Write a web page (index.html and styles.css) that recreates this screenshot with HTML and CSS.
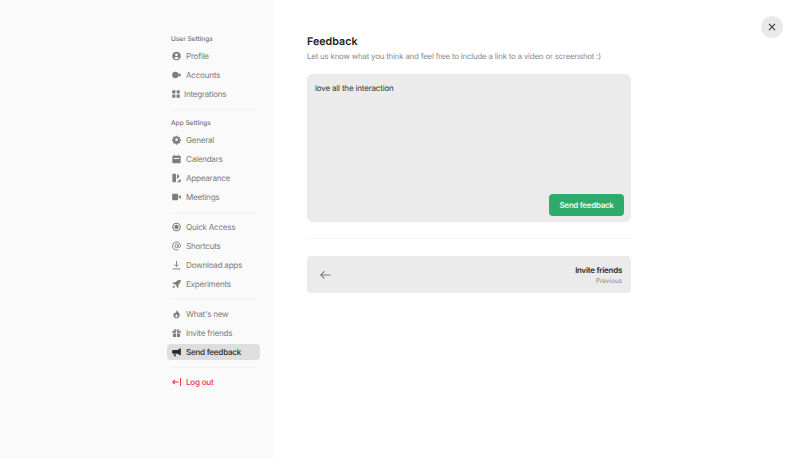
FILE: index.html
```html
<!DOCTYPE html>
<html lang="en">
<head>
<meta charset="utf-8">
<title>Feedback</title>
<link rel="stylesheet" href="styles.css">
</head>
<body>
<div class="app">
  <nav class="sidebar">
    <div class="group-title">User Settings</div>
    <a class="item"><svg class="icon" viewBox="0 0 10 10"><path fill-rule="evenodd" d="M5 .2a4.800 4.800 0 1 0 0 9.600A4.800 4.800 0 0 0 5 .2zm0 1.900a1.600 1.600 0 1 1 0 3.200 1.600 1.600 0 0 1 0-3.200zM2.300 7.300C2.800 6.400 3.800 6 5 6s2.200.4 2.700 1.300A3.500 3.500 0 0 1 5 8.600a3.500 3.500 0 0 1-2.700-1.300z"/></svg>Profile</a>
    <a class="item"><svg class="icon" viewBox="0 0 10 10"><circle cx="3.700" cy="5" r="3.500"/><circle cx="8.300" cy="5" r="1.600"/></svg>Accounts</a>
    <a class="item tight"><svg class="icon small" viewBox="0 0 8 8"><rect x=".2" y=".2" width="3.200" height="3.200" rx=".5"/><rect x="4.600" y=".2" width="3.200" height="3.200" rx=".9"/><rect x=".2" y="4.600" width="3.200" height="3.200" rx=".5"/><rect x="4.600" y="4.600" width="3.200" height="3.200" rx=".5"/></svg>Integrations</a>
    <hr class="divider">
    <div class="group-title">App Settings</div>
    <a class="item"><svg class="icon" viewBox="0 0 10 10"><path fill-rule="evenodd" d="M4.100.2h1.800l.3 1.300.8.4 1.200-.7 1.300 1.300-.7 1.200.4.8 1.300.3v1.800l-1.300.3-.4.8.7 1.200-1.300 1.300-1.200-.7-.8.4-.3 1.300H4.100l-.3-1.300-.8-.4-1.200.7L.5 8.600l.7-1.200-.4-.8L-.5 6.300V4.500l1.300-.3.4-.8-.7-1.200 1.300-1.300 1.200.7.8-.4zM5 3.400a1.600 1.600 0 1 0 0 3.200 1.600 1.600 0 0 0 0-3.200z" transform="translate(.5 .1) scale(.9)"/></svg>General</a>
    <a class="item"><svg class="icon" viewBox="0 0 10 10"><path fill-rule="evenodd" d="M2.400.4h1v1h3.200v-1h1v1h1.200c.4 0 .8.4.8.8v6.600c0 .5-.4.8-.8.8H1.200a.8.8 0 0 1-.8-.8V2.200c0-.4.4-.8.8-.8h1.200zM2 4v1h6V4z"/></svg>Calendars</a>
    <a class="item"><svg class="icon" viewBox="0 0 10 10"><rect x=".4" y=".3" width="4" height="9.400" rx=".7"/><path d="M5.500 1.400l1.200-.6 1.600 2.400-2.800 3.200zM5.300 9.700l4.400-3.900v3.200c0 .4-.3.7-.7.7z"/></svg>Appearance</a>
    <a class="item"><svg class="icon" viewBox="0 0 10 10"><rect x=".2" y="1.400" width="6.600" height="7.200" rx=".9"/><path d="M7.600 4.200l2.200-1.400v4.400L7.600 5.800z"/></svg>Meetings</a>
    <hr class="divider">
    <a class="item"><svg class="icon" viewBox="0 0 10 10"><path fill-rule="evenodd" d="M5 .2a4.800 4.800 0 1 0 0 9.600A4.800 4.800 0 0 0 5 .2zm0 1.300a3.500 3.500 0 1 1 0 7 3.500 3.500 0 0 1 0-7z"/><circle cx="5" cy="5" r="2.400"/></svg>Quick Access</a>
    <a class="item"><svg class="icon outline" viewBox="0 0 10 10"><circle cx="5" cy="5" r="1.800"/><path d="M6.800 3.200V5.600c0 1.500 2.600 1.400 2.600-.6A4.400 4.400 0 1 0 7.200 8.800"/></svg>Shortcuts</a>
    <a class="item"><svg class="icon outline" viewBox="0 0 10 10"><path d="M5 .4v6.200M2.600 4.400L5 6.800l2.400-2.400M.8 9.400h8.400"/></svg>Download apps</a>
    <a class="item"><svg class="icon" viewBox="0 0 10 10"><path d="M9.800.2C7.600.2 5.600 1 4 3H1.600L.2 4.800h2.400l2.800 2.800v2.200l1.800-1.400V5.800C9 4.300 9.800 2.400 9.800.2z"/><path d="M1.800 6.400l1.800 1.800L.4 9.600z"/></svg>Experiments</a>
    <hr class="divider">
    <a class="item"><svg class="icon" viewBox="0 0 10 10"><path fill-rule="evenodd" d="M5.400.2c.3 1.500 1 2 1.700 2.900.7.9 1.400 1.900 1.400 3.200C8.500 8.400 6.900 9.800 5 9.800S1.500 8.400 1.500 6.300c0-1.200.5-2.200 1.200-3l.7 1.200C4.400 3.400 5.300 1.800 5.400.2zM5 5.400C4.300 6.100 3.700 6.700 3.700 7.400 3.700 8.100 4.300 8.600 5 8.600s1.300-.5 1.300-1.200C6.300 6.700 5.700 6.100 5 5.400z"/></svg>What's new</a>
    <a class="item"><svg class="icon" viewBox="0 0 10 10"><path d="M.3 2.600h4.200v2.100H.3zM5.500 2.600h4.200v2.100H5.500zM1 5.500h3.500v4H1.800a.8.8 0 0 1-.8-.8zM5.500 5.500H9v3.200a.8.8 0 0 1-.8.8H5.500z"/><path d="M5 2.600C3.800 2.600 2.400 2.300 2.400 1.300c0-1.400 2-1.200 2.600 1.300.6-2.500 2.600-2.700 2.600-1.300 0 1-1.400 1.300-2.600 1.300z"/></svg>Invite friends</a>
    <a class="item active"><svg class="icon" viewBox="0 0 10 10"><path d="M9.800.6v8.200L6.200 7H1.400C.7 7 .2 6.500.2 5.800V4c0-.7.5-1.200 1.200-1.200h4.800z"/><path d="M1.800 7.400h2l.8 2.200H2.800z"/></svg>Send feedback</a>
    <hr class="divider">
    <a class="item logout"><svg class="icon outline" viewBox="0 0 10 10"><path d="M9.500.6v8.800M7.500 5H.8M3.200 2.600L.8 5l2.400 2.400"/></svg>Log out</a>
  </nav>
  <main class="main">
    <button class="close" aria-label="Close"><svg viewBox="0 0 10 10"><path d="M1.200 1.200l7.600 7.600M8.800 1.200L1.200 8.800"/></svg></button>
    <section class="content">
      <h1 class="title">Feedback</h1>
      <p class="sub">Let us know what you think and feel free to include a link to a video or screenshot :)</p>
      <div class="box">
        <div class="box-text">love all the interaction</div>
        <button class="send">Send feedback</button>
      </div>
      <hr class="rule">
      <a class="prev">
        <svg class="arrow" viewBox="0 0 12 10"><path d="M11.500 5H.8M4.800 1L.8 5l4 4"/></svg>
        <span class="prev-text"><span class="prev-name">Invite friends</span><span class="prev-label">Previous</span></span>
      </a>
    </section>
  </main>
</div>
</body>
</html>
```

FILE: styles.css
```css
* { box-sizing: border-box; }
html, body { margin: 0; height: 100%; background: #fff; }
body { font-family: Inter, "Liberation Sans", sans-serif; overflow: hidden; text-rendering: geometricPrecision; }
.app { display: flex; width: 800px; height: 459px; }
.sidebar {
  width: 273px;
  background: #fafafa;
  padding: 32px 13px 0 167px;
  display: flex;
  flex-direction: column;
}
.group-title {
  height: 14px;
  line-height: 15px;
  margin: 0 0 2px 4px;
  font-size: 6.500px;
  font-weight: 500;
  color: #6f6f6f;
}
.item {
  display: flex;
  align-items: center;
  gap: 5px;
  height: 16px;
  padding-left: 5px;
  margin-bottom: 3px;
  border-radius: 4px;
  font-size: 8.100px;
  line-height: 17px;
  letter-spacing: -.25px;
  font-weight: 400;
  color: #7c7c7c;
}
.item.tight { gap: 4px; }
.icon { width: 9px; height: 10px; flex: none; fill: #7d7d7d; }
.icon.small { width: 8px; height: 8px; }
.icon.outline { fill: none; stroke: #7d7d7d; stroke-width: 1; }
.item.active { background: #dedede; color: #2b2b2b; font-weight: 500; }
.item.active .icon { fill: #2b2b2b; }
.item.logout { color: #f4364c; font-weight: 500; }
.item.logout .icon { stroke: #f4364c; stroke-width: 1.200; }
.divider {
  width: 85px;
  height: 1px;
  margin: 4px 0 6px 4px;
  border: 0;
  background: #f1f1f1;
}
.main { flex: 1; position: relative; padding: 34px 0 0 34px; }
.close {
  position: absolute;
  top: 16px;
  left: 488px;
  width: 22px;
  height: 22px;
  padding: 0;
  display: flex;
  align-items: center;
  justify-content: center;
  border: 0;
  border-radius: 50%;
  background: #e9e9e9;
}
.close svg { width: 8px; height: 8px; fill: none; stroke: #3c3c3c; stroke-width: 1.400; }
.content { width: 324px; }
.title { margin: 0; height: 14px; line-height: 15px; font-size: 10.700px; font-weight: 600; color: #1d1d1d; }
.sub { margin: 1px 0 0; height: 25px; padding-top: 1px; line-height: 12px; font-size: 7.900px; letter-spacing: -.2px; color: #8a8a8a; }
.box {
  position: relative;
  height: 148px;
  padding: 9px 8px;
  background: #ebebeb;
  border-radius: 6px;
}
.box-text { font-size: 8px; line-height: 10px; letter-spacing: -.17px; font-weight: 400; color: #333; }
.send {
  position: absolute;
  right: 7px;
  bottom: 6px;
  width: 75px;
  height: 22px;
  padding: 0;
  border: 0;
  border-radius: 4px;
  background: #2eaa6b;
  color: #eef8f2;
  font: 600 8px Inter, "Liberation Sans", sans-serif;
  letter-spacing: -.3px;
  text-rendering: geometricPrecision;
}
.rule { height: 1px; margin: 16px 0 17px; border: 0; background: #f5f5f5; }
.prev {
  height: 37px;
  display: flex;
  align-items: center;
  justify-content: space-between;
  padding: 0 9px 0 13px;
  background: #ebebeb;
  border-radius: 4px;
}
.arrow { width: 11px; height: 10px; fill: none; stroke: #7d7d7d; stroke-width: 1.300; }
.prev-text { display: flex; flex-direction: column; align-items: flex-end; }
.prev-name { font-size: 8px; line-height: 12px; letter-spacing: -.28px; font-weight: 600; color: #2b2b2b; }
.prev-label { font-size: 6.400px; line-height: 10px; color: #8a8a8a; }
```
